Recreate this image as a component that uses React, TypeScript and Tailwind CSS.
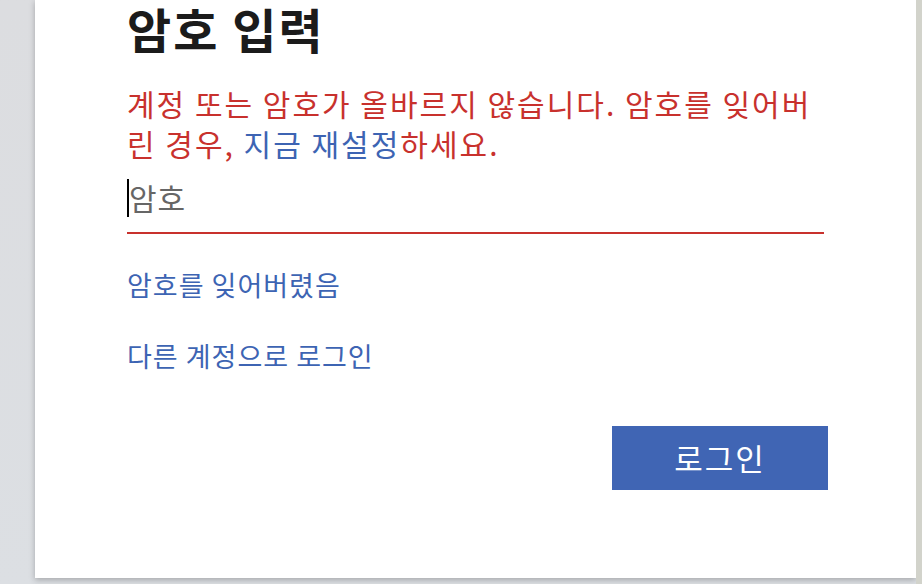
export default function App() {
  return (
    <div
      className="flex h-[584px] w-full overflow-hidden bg-gradient-to-b from-[#dcdde0] to-[#dcdfe3]"
      style={{ fontFamily: '"Noto Sans CJK KR", "Noto Sans", sans-serif' }}
    >
      {/* card */}
      <div className="ml-[35px] h-[578px] w-[881px] shrink-0 bg-white shadow-[0_2px_6px_rgba(0,0,0,0.25)]">
        <div className="w-[701px] pl-[92px] box-content">
          <h1 className="text-[48px] font-bold leading-[56px] tracking-[2px] text-[#1b1b1b]">암호 입력</h1>

          <p className="mt-[27px] whitespace-nowrap text-[30px] leading-[40px] tracking-[2px] text-[#c8312d]">
            계정 또는 암호가 올바르지 않습니다. 암호를 잊어버
            <br />
            린 경우, <span className="text-[#3d64b3]">지금 재설정</span>하세요.
          </p>

          <div className="flex h-[71px] w-[697px] items-center border-b-2 border-[#c8312d]">
            <span className="h-[38px] w-[2px] bg-black" />
            <span className="-mt-[2px] text-[30px] leading-none tracking-[1px] text-[#666666]">암호</span>
          </div>

          <div className="mt-[33px] text-[27px] leading-[36px] tracking-[1px] text-[#3d64b3]">암호를 잊어버렸음</div>
          <div className="mt-[35px] text-[27px] leading-[36px] tracking-[1px] text-[#3d64b3]">다른 계정으로 로그인</div>

          <div className="mt-[52px] flex justify-end">
            <button className="h-[64px] w-[216px] bg-[#4065b4] text-[31px] tracking-[2px] text-white">로그인</button>
          </div>
        </div>
      </div>
      <div className="flex-1 bg-[#d2d3cb]" />
    </div>
  );
}
